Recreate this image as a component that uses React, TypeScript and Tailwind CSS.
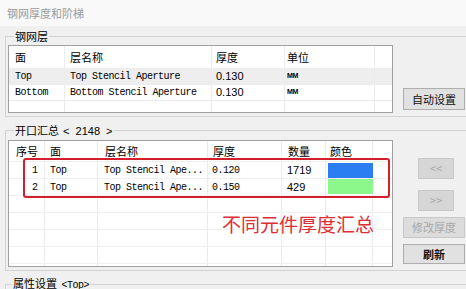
import React from "react";

const cjk = "font-['Noto_Sans_CJK_SC',sans-serif]";
const mono = "font-['Liberation_Mono','Noto_Sans_CJK_SC',monospace]";
const sans = "font-['Liberation_Sans','Noto_Sans_CJK_SC',sans-serif]";

function Btn({ label, disabled, className }: { label: string; disabled?: boolean; className: string }) {
  return (
    <div
      className={
        "flex items-center justify-center border text-[11px] " +
        cjk +
        " " +
        (disabled
          ? "border-[#c8c8c8] bg-[#d6d6d6] text-[#a8a8a8]"
          : "border-[#adadad] bg-[#e1e1e1] text-[#111]") +
        " " +
        className
      }
    >
      {label}
    </div>
  );
}

const t1w = ["w-[56px]", "w-[147px]", "w-[73px]", "w-[90px]", "w-[17px]"];
const t2w = ["w-[36px]", "w-[53px]", "w-[110px]", "w-[74px]", "w-[44px]", "w-[47px]", "w-[19px]"];

function Table1() {
  const rows = [
    { face: "Top", name: "Top Stencil Aperture", th: "0.130", bg: "bg-[#eeeeee]" },
    { face: "Bottom", name: "Bottom Stencil Aperture", th: "0.130", bg: "bg-white" },
  ];
  return (
    <div className="w-[385px] h-[68px] border border-[#a0a0a0] bg-white flex flex-col overflow-hidden">
      <div className={"flex h-[22px] items-center text-[11px] text-black " + cjk}>
        <div className={t1w[0] + " h-full flex items-center pl-[6px] border-r border-[#ececec]"}>面</div>
        <div className={t1w[1] + " h-full flex items-center pl-[5px] border-r border-[#ececec]"}>层名称</div>
        <div className={t1w[2] + " h-full flex items-center pl-[4px] border-r border-[#ececec]"}>厚度</div>
        <div className={t1w[3] + " h-full flex items-center pl-[2px] border-r border-[#ececec]"}>单位</div>
        <div className={t1w[4] + " h-full"}></div>
      </div>
      {rows.map((r, i) => (
        <div key={i} className={"flex h-[16px] items-center border-t border-[#ececec] " + r.bg}>
          <div className={t1w[0] + " h-full flex items-center pl-[6px] border-r border-[#ececec] text-[10px] tracking-[-0.5px] " + mono}>{r.face}</div>
          <div className={t1w[1] + " h-full flex items-center pl-[5px] border-r border-[#ececec] text-[10px] tracking-[-0.5px] whitespace-nowrap " + mono}>{r.name}</div>
          <div className={t1w[2] + " h-full flex items-center pl-[4px] border-r border-[#ececec] text-[11px] " + sans}>{r.th}</div>
          <div className={t1w[3] + " h-full flex items-center pl-[2px] border-r border-[#ececec] text-[7px] font-bold tracking-[-0.3px] " + sans}>MM</div>
          <div className={t1w[4] + " h-full"}></div>
        </div>
      ))}
      <div className="flex flex-1 border-t border-[#ececec]">
        {t1w.map((w, i) => (
          <div key={i} className={w + " h-full " + (i < 4 ? "border-r border-[#ececec]" : "")}></div>
        ))}
      </div>
    </div>
  );
}

function Table2() {
  const rows = [
    { n: "1", face: "Top", name: "Top Stencil Ape...", th: "0.120", q: "1719", color: "bg-[#2b7ef2]", sw: "mt-[1px] h-[16px]" },
    { n: "2", face: "Top", name: "Top Stencil Ape...", th: "0.150", q: "429", color: "bg-[#8cf88c]", sw: "mb-[1px] h-[16px]" },
    { n: "", face: "", name: "", th: "", q: "", color: "", sw: "" },
    { n: "", face: "", name: "", th: "", q: "", color: "", sw: "" },
    { n: "", face: "", name: "", th: "", q: "", color: "", sw: "" },
    { n: "", face: "", name: "", th: "", q: "", color: "", sw: "" },
  ];
  return (
    <div className="relative w-[385px] h-[127px] border border-[#a0a0a0] bg-white flex flex-col overflow-visible">
      <div className={"flex h-[20px] items-center text-[11px] text-black " + cjk}>
        <div className={t2w[0] + " h-full flex items-center pl-[7px] border-r border-[#ececec]"}>序号</div>
        <div className={t2w[1] + " h-full flex items-center pl-[5px] border-r border-[#ececec]"}>面</div>
        <div className={t2w[2] + " h-full flex items-center pl-[7px] border-r border-[#ececec]"}>层名称</div>
        <div className={t2w[3] + " h-full flex items-center pl-[5px] border-r border-[#ececec]"}>厚度</div>
        <div className={t2w[4] + " h-full flex items-center pl-[6px] border-r border-[#ececec]"}>数量</div>
        <div className={t2w[5] + " h-full flex items-center pl-[4px] border-r border-[#ececec]"}>颜色</div>
        <div className={t2w[6] + " h-full"}></div>
      </div>
      {rows.map((r, i) => (
        <div key={i} className="flex h-[17px] items-center border-t border-[#f0f0f0]">
          <div className={t2w[0] + " h-full flex items-center justify-end pr-[6px] border-r border-[#ececec] text-[10px] " + mono}>{r.n}</div>
          <div className={t2w[1] + " h-full flex items-center pl-[5px] border-r border-[#ececec] text-[10px] tracking-[-0.5px] " + mono}>{r.face}</div>
          <div className={t2w[2] + " h-full flex items-center pl-[6px] border-r border-[#ececec] text-[10px] tracking-[-0.5px] whitespace-nowrap " + mono}>{r.name}</div>
          <div className={t2w[3] + " h-full flex items-center pl-[4px] border-r border-[#ececec] text-[10px] tracking-[-0.5px] " + mono}>{r.th}</div>
          <div className={t2w[4] + " h-full flex items-center pl-[5px] border-r border-[#ececec] text-[11px] " + sans}>{r.q}</div>
          <div className={t2w[5] + " h-full flex flex-col justify-center pl-[2px] border-r border-[#ececec]"}>
            {r.color && <div className={"w-[45px] " + r.sw + " " + r.color}></div>}
          </div>
          <div className={t2w[6] + " h-full"}></div>
        </div>
      ))}
      <div className="flex flex-1 border-t border-[#f0f0f0]">
        {t2w.map((w, i) => (
          <div key={i} className={w + " h-full " + (i < 6 ? "border-r border-[#ececec]" : "")}></div>
        ))}
      </div>
      {/* red highlight annotation */}
      <div className="absolute left-[14px] top-[17px] w-[367px] h-[40px] border-2 border-[#d21f2b] rounded-[3px]"></div>
      <div className={"absolute left-[213px] top-[73px] text-[19px] leading-none text-[#dd2e36] whitespace-nowrap " + cjk}>
        不同元件厚度汇总
      </div>
    </div>
  );
}

export default function App() {
  return (
    <div className={"w-[466px] h-[289px] overflow-hidden bg-[#f0f0f0] flex flex-col " + cjk}>
      <div className="h-[26px] shrink-0 bg-[#f9f9f9] flex items-center pl-[7px] text-[11px] text-[#9a9a9a]">
        钢网厚度和阶梯
      </div>

      <fieldset className="mt-[3px] ml-[5px] w-[470px] shrink-0 border border-[#d3d3d3] pt-[2px] pb-[3px] pl-[2px]">
        <legend className="ml-[6px] px-[1px] text-[11px] leading-[14px] text-black">钢网层</legend>
        <div className="flex items-end gap-[10px]">
          <Table1 />
          <Btn label="自动设置" className="w-[62px] h-[22px] mb-[3px]" />
        </div>
      </fieldset>

      <fieldset className="mt-[6px] ml-[5px] w-[470px] shrink-0 border border-[#d3d3d3] pt-[2px] pb-[3px] pl-[2px]">
        <legend className="ml-[6px] px-[1px] text-[11px] leading-[14px] text-black whitespace-pre">
          开口汇总<span className={"ml-[4px] " + sans}>&lt;&nbsp;&nbsp;2148&nbsp;&nbsp;&gt;</span>
        </legend>
        <div className="flex items-start gap-[10px]">
          <Table2 />
          <div className="w-[62px] flex flex-col pt-[18px]">
            <Btn label="<<" disabled className={"ml-[15px] w-[36px] h-[21px] " + sans} />
            <Btn label=">>" disabled className={"ml-[15px] w-[36px] h-[21px] mt-[11px] " + sans} />
            <Btn label="修改厚度" disabled className="w-[62px] h-[21px] mt-[6px] bg-[#dcdcdc]" />
            <Btn label="刷新" className="w-[62px] h-[20px] mt-[6px] font-bold" />
          </div>
        </div>
      </fieldset>

      <fieldset className="mt-[5px] ml-[5px] w-[470px] h-[40px] shrink-0 border border-[#d3d3d3]">
        <legend className="ml-[6px] px-[1px] text-[11px] leading-[14px] text-black whitespace-pre">
          属性设置 <span className={"ml-[2px] text-[10px] tracking-[-0.5px] " + mono}>&lt;Top&gt;</span>
        </legend>
      </fieldset>
    </div>
  );
}
